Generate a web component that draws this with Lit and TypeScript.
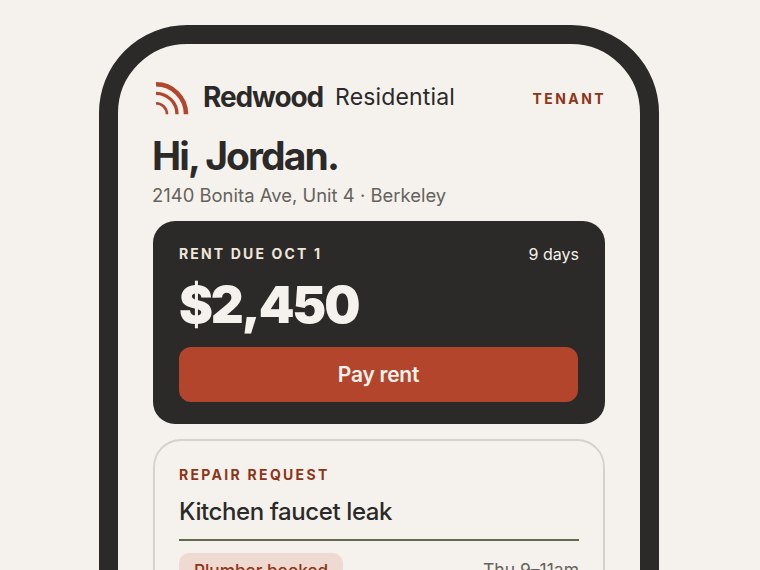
import { LitElement, html, css } from "lit";
import { customElement } from "lit/decorators.js";

@customElement("app-root")
export class AppRoot extends LitElement {
  static styles = css`
    :host {
      display: block;
      height: 570px;
      overflow: hidden;
      background: #f5f2ed;
      font-family: "Inter", "Liberation Sans", sans-serif;
      color: #2b2a28;
    }
    .stage { padding: 25px 0 0 99px; }
    .phone {
      box-sizing: border-box;
      width: 560px;
      height: 760px;
      border: 19px solid #2b2a28;
      border-radius: 88px;
      padding: 35px 35px 0 35px;
      background: #f5f2ed;
    }
    .brand { display: flex; align-items: center; height: 36px; padding-left: 2px; }
    .logo { width: 36px; height: 36px; flex: none; display: block; }
    .name { margin-left: 12px; font-size: 28px; font-weight: 700; letter-spacing: -1.1px; }
    .sub { margin-left: 12px; font-size: 23px; font-weight: 400; letter-spacing: 0.15px; }
    .role { margin: 2px -1px 0 auto; font-size: 14px; font-weight: 700; letter-spacing: 2.4px; color: #8f3417; }
    h1 { margin: 19px 0 0 -1px; font-size: 39px; line-height: 44px; font-weight: 700; letter-spacing: -1.9px; }
    .addr { margin: 4px 0 0 -1px; font-size: 18.4px; line-height: 26px; color: #66625c; letter-spacing: 0.03px; }
    .rent {
      margin-top: 13px; background: #2b2a28; border-radius: 22px;
      padding: 23px 27px 22px 26px; color: #f5f2ed;
    }
    .row { display: flex; justify-content: space-between; align-items: center; }
    .due { font-size: 14px; font-weight: 700; letter-spacing: 2.15px; line-height: 20px; color: #f0e6da; }
    .days { font-size: 16px; line-height: 20px; margin-right: -1px; }
    .amount { margin-top: 8px; font-size: 51px; line-height: 66px; font-weight: 900; letter-spacing: -2.1px; }
    .pay {
      margin-top: 9px; height: 55px; border-radius: 12px; background: #b2452b;
      display: flex; align-items: center; justify-content: center;
      font-size: 21px; font-weight: 600; letter-spacing: -0.25px; color: #f5f2ed;
    }
    .card {
      margin-top: 15px; border: 2px solid #d6d2ca; border-radius: 28px;
      padding: 24px 24px;
    }
    .label { font-size: 14px; line-height: 20px; font-weight: 700; letter-spacing: 2.3px; color: #8f3417; }
    .title { margin-top: 12px; font-size: 24px; line-height: 30px; font-weight: 500; letter-spacing: -0.4px; }
    .rule { margin-top: 11.5px; height: 2px; background: #5f6b4a; }
    .status { margin-top: 12.5px; }
    .pill { background: #efdad2; color: #8f3417; border-radius: 10px; padding: 0 15px; height: 34px; display: flex; align-items: center; font-size: 17.2px; font-weight: 500; }
    .when { font-size: 17.5px; color: #66625c; margin-bottom: 2px; }
  `;

  render() {
    return html`
      <div class="stage">
        <div class="phone">
          <div class="brand">
            <svg class="logo" viewBox="0 0 36 36" fill="none" stroke="#b2452b">
              <path stroke-width="4.5" d="M1 5.3a30 30 0 0 1 30 30" />
              <path stroke-width="3.3" d="M1 14.3a21 21 0 0 1 21 21" />
              <path stroke-width="2.6" d="M1 24.3a11 11 0 0 1 11 11" />
            </svg>
            <span class="name">Redwood</span>
            <span class="sub">Residential</span>
            <span class="role">TENANT</span>
          </div>
          <h1>Hi, Jordan.</h1>
          <div class="addr">2140 Bonita Ave, Unit 4 · Berkeley</div>
          <div class="rent">
            <div class="row">
              <span class="due">RENT DUE OCT 1</span>
              <span class="days">9 days</span>
            </div>
            <div class="amount">$2,450</div>
            <div class="pay">Pay rent</div>
          </div>
          <div class="card">
            <div class="label">REPAIR REQUEST</div>
            <div class="title">Kitchen faucet leak</div>
            <div class="rule"></div>
            <div class="row status">
              <span class="pill">Plumber booked</span>
              <span class="when">Thu 9–11am</span>
            </div>
          </div>
        </div>
      </div>
    `;
  }
}
